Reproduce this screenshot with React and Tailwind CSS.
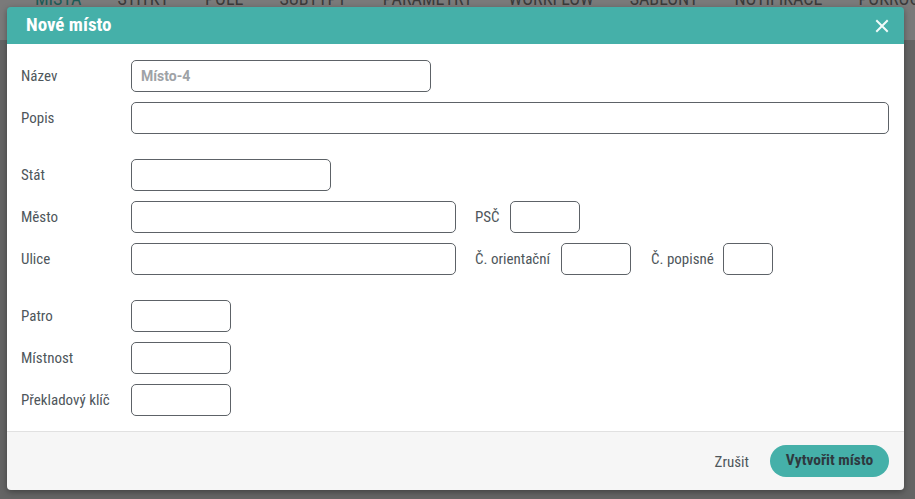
import React from "react";

const font = { fontFamily: "Roboto, 'Liberation Sans', sans-serif" };

function Input({ w, placeholder }) {
  return (
    <div
      className={`h-[32px] ${w} shrink-0 rounded-[5px] border border-[#5d6267] bg-white flex items-center px-[9px]`}
    >
      {placeholder ? (
        <span className="text-[14px] font-bold text-[#9ea2a6]">{placeholder}</span>
      ) : null}
    </div>
  );
}

function Label({ children, w = "w-[110px]" }) {
  return (
    <div className={`${w} shrink-0 text-[15px] text-[#4e565b] [font-stretch:condensed]`}>{children}</div>
  );
}

function Row({ children }) {
  return <div className="flex items-center h-[32px]">{children}</div>;
}

export default function App() {
  const tabs = [
    ["MÍSTA", "text-[#1d5a56]"],
    ["ŠTÍTKY", "text-[#3a3a3a]"],
    ["POLE", "text-[#3a3a3a]"],
    ["SUBTYPY", "text-[#3a3a3a]"],
    ["PARAMETRY", "text-[#3a3a3a]"],
    ["WORKFLOW", "text-[#3a3a3a]"],
    ["ŠABLONY", "text-[#3a3a3a]"],
    ["NOTIFIKACE", "text-[#3a3a3a]"],
    ["POKROČILÉ", "text-[#3a3a3a]"],
  ];
  return (
    <div className="relative w-[915px] h-[499px] overflow-hidden bg-[#595959] flex" style={font}>
      <div className="w-[7px] h-full bg-[#1a1f21]" />
      <div className="flex-1 flex flex-col">
        <div className="h-[40px] bg-[#7a7a7a] overflow-hidden">
          <div className="flex gap-[36px] pl-[35px] -mt-[14px] text-[18px] leading-[25px] [font-stretch:condensed] whitespace-nowrap">
            {tabs.map(([t, c]) => (
              <span key={t} className={c}>{t}</span>
            ))}
          </div>
        </div>
        <div className="flex-1 bg-[#646464]" />
      </div>
      <div className="w-[10px] h-full flex flex-col">
        <div className="h-[35px] bg-[#5a5a5a]" />
        <div className="flex-1 bg-[#6e6e6e]" />
      </div>

      <div className="absolute left-[7px] top-[7px] w-[897px] h-[483px] rounded-[4px] overflow-hidden flex flex-col shadow-[0_2px_6px_rgba(0,0,0,0.35)]">
        <div className="h-[37px] shrink-0 bg-[#45b0a9] flex items-center justify-between pl-[19px] pr-[15px]">
          <span className="text-white text-[19px] font-bold [font-stretch:condensed]">Nové místo</span>
          <svg width="14" height="14" viewBox="0 0 14 14" className="mt-[1px]">
            <path d="M2 2 L12 12 M12 2 L2 12" stroke="#f2fbfa" strokeWidth="2" strokeLinecap="square" />
          </svg>
        </div>
        <div className="h-[387px] shrink-0 bg-white px-[14px] pt-[16px] flex flex-col">
          <Row>
            <Label>Název</Label>
            <Input w="w-[300px]" placeholder="Místo-4" />
          </Row>
          <div className="h-[10px]" />
          <Row>
            <Label>Popis</Label>
            <div className="flex-1 pr-[1px]">
              <Input w="w-full" />
            </div>
          </Row>
          <div className="h-[25px]" />
          <Row>
            <Label>Stát</Label>
            <Input w="w-[200px]" />
          </Row>
          <div className="h-[10px]" />
          <Row>
            <Label>Město</Label>
            <Input w="w-[325px]" />
            <div className="w-[19px]" />
            <Label w="w-[35px]">PSČ</Label>
            <Input w="w-[70px]" />
          </Row>
          <div className="h-[10px]" />
          <Row>
            <Label>Ulice</Label>
            <Input w="w-[325px]" />
            <div className="w-[19px]" />
            <Label w="w-[86px]">Č. orientační</Label>
            <Input w="w-[70px]" />
            <div className="w-[20px]" />
            <Label w="w-[72px]">Č. popisné</Label>
            <Input w="w-[50px]" />
          </Row>
          <div className="h-[25px]" />
          <Row>
            <Label>Patro</Label>
            <Input w="w-[100px]" />
          </Row>
          <div className="h-[10px]" />
          <Row>
            <Label>Místnost</Label>
            <Input w="w-[100px]" />
          </Row>
          <div className="h-[10px]" />
          <Row>
            <Label>Překladový klíč</Label>
            <Input w="w-[100px]" />
          </Row>
        </div>
        <div className="flex-1 bg-[#f6f6f6] border-t border-[#e1e1e1] flex items-center justify-end pr-[15px] gap-[21px]">
          <span className="text-[15px] text-[#4e565b] [font-stretch:condensed] mt-[2px]">Zrušit</span>
          <button className="h-[32px] w-[119px] rounded-full bg-[#45b0a9] text-[15.5px] font-bold text-[#2e393f] [font-stretch:condensed]">
            Vytvořit místo
          </button>
        </div>
      </div>
    </div>
  );
}
